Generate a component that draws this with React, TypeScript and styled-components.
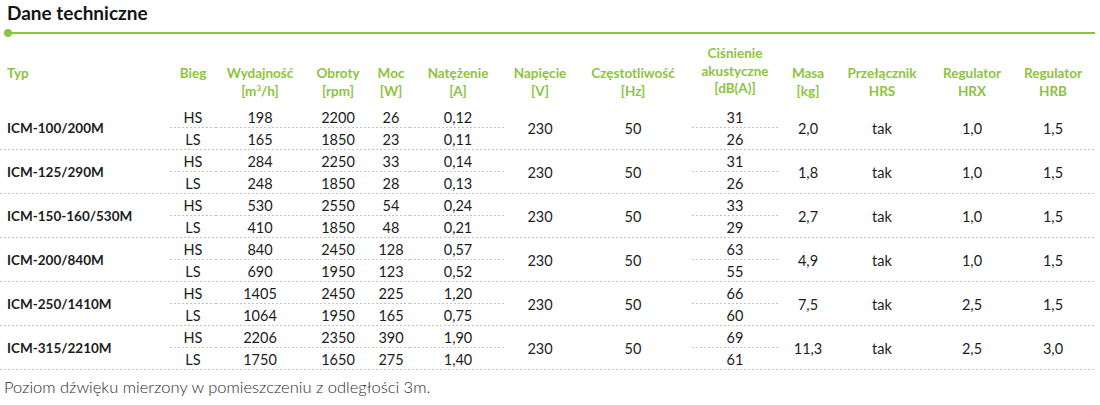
import React, { ReactNode } from "react";
import styled, { createGlobalStyle } from "styled-components";

const GREEN = "#8cc43e";
const DOTS = "#c4c4c4";

const GlobalStyle = createGlobalStyle`
  html, body {
    margin: 0;
    padding: 0;
    background: #fff;
  }
  body {
    font-family: Lato, "Open Sans", "Liberation Sans", sans-serif;
    color: #1c1c1c;
  }
`;

type Col = {
  key: string;
  w: number;
  head: ReactNode;
  pair?: boolean;
  left?: boolean;
  tall?: boolean;
};

const columns: Col[] = [
  { key: "typ", w: 170, head: "Typ", left: true },
  { key: "bieg", w: 46, head: "Bieg", pair: true },
  {
    key: "wyd",
    w: 88,
    head: (
      <>
        Wydajność
        <br />
        [m<sup>3</sup>/h]
      </>
    ),
    pair: true,
  },
  { key: "obr", w: 68, head: <>Obroty<br />[rpm]</>, pair: true },
  { key: "moc", w: 38, head: <>Moc<br />[W]</>, pair: true },
  { key: "nat", w: 96, head: <>Natężenie<br />[A]</>, pair: true },
  { key: "nap", w: 68, head: <>Napięcie<br />[V]</> },
  { key: "hz", w: 118, head: <>Częstotliwość<br />[Hz]</> },
  {
    key: "db",
    w: 86,
    head: <>Ciśnienie<br />akustyczne<br />[dB(A)]</>,
    pair: true,
    tall: true,
  },
  { key: "masa", w: 60, head: <>Masa<br />[kg]</> },
  { key: "hrs", w: 88, head: <>Przełącznik<br />HRS</> },
  { key: "hrx", w: 92, head: <>Regulator<br />HRX</> },
  { key: "hrb", w: 70, head: <>Regulator<br />HRB</> },
];

type Group = {
  typ: string;
  hs: Record<string, string>;
  ls: Record<string, string>;
  one: Record<string, string>;
};

const mk = (
  typ: string,
  hs: string[],
  ls: string[],
  masa: string,
  hrx: string,
  hrb: string
): Group => ({
  typ,
  hs: { bieg: "HS", wyd: hs[0], obr: hs[1], moc: hs[2], nat: hs[3], db: hs[4] },
  ls: { bieg: "LS", wyd: ls[0], obr: ls[1], moc: ls[2], nat: ls[3], db: ls[4] },
  one: { typ, nap: "230", hz: "50", masa, hrs: "tak", hrx, hrb },
});

const groups: Group[] = [
  mk("ICM-100/200M", ["198", "2200", "26", "0,12", "31"], ["165", "1850", "23", "0,11", "26"], "2,0", "1,0", "1,5"),
  mk("ICM-125/290M", ["284", "2250", "33", "0,14", "31"], ["248", "1850", "28", "0,13", "26"], "1,8", "1,0", "1,5"),
  mk("ICM-150-160/530M", ["530", "2550", "54", "0,24", "33"], ["410", "1850", "48", "0,21", "29"], "2,7", "1,0", "1,5"),
  mk("ICM-200/840M", ["840", "2450", "128", "0,57", "63"], ["690", "1950", "123", "0,52", "55"], "4,9", "1,0", "1,5"),
  mk("ICM-250/1410M", ["1405", "2450", "225", "1,20", "66"], ["1064", "1950", "165", "0,75", "60"], "7,5", "2,5", "1,5"),
  mk("ICM-315/2210M", ["2206", "2350", "390", "1,90", "69"], ["1750", "1650", "275", "1,40", "61"], "11,3", "2,5", "3,0"),
];

const dotted = `
  background-image: linear-gradient(to right, ${DOTS} 50%, transparent 50%);
  background-size: 4px 1px;
  background-repeat: repeat-x;
  background-position: left bottom;
`;

const Page = styled.div`
  width: 1100px;
  height: 405px;
  overflow: hidden;
`;

const Title = styled.h2`
  margin: 0;
  padding: 1px 0 0 7px;
  height: 25px;
  font-size: 19px;
  line-height: 24px;
  font-weight: 700;
  color: #141414;
`;

const Rule = styled.div`
  position: relative;
  margin: 6px 0 0 8px;
  width: 1087px;
  height: 2px;
  background: ${GREEN};

  &::before {
    content: "";
    position: absolute;
    left: -4px;
    top: -3px;
    width: 8px;
    height: 8px;
    border-radius: 50%;
    background: ${GREEN};
  }
`;

const Table = styled.div`
  width: 1096px;
  margin-top: 31px;
`;

const HeadRow = styled.div`
  display: flex;
  align-items: flex-start;
  height: 41px;
`;

const HeadCell = styled.div<{ $w: number; $left?: boolean; $tall?: boolean }>`
  flex: 0 0 ${({ $w }) => $w}px;
  text-align: ${({ $left }) => ($left ? "left" : "center")};
  padding-left: ${({ $left }) => ($left ? 7 : 0)}px;
  box-sizing: border-box;
  margin-top: ${({ $tall }) => ($tall ? -20 : 0)}px;
  color: ${GREEN};
  font-size: 13.5px;
  font-weight: 700;
  line-height: 17.5px;
  white-space: nowrap;

  sup {
    font-size: 8px;
    line-height: 0;
    vertical-align: 5px;
  }
`;

const GroupRow = styled.div`
  display: flex;
  height: 44px;
  ${dotted}
`;

const Span = styled.div<{ $w: number; $left?: boolean; $bold?: boolean }>`
  flex: 0 0 ${({ $w }) => $w}px;
  display: flex;
  align-items: center;
  justify-content: ${({ $left }) => ($left ? "flex-start" : "center")};
  padding-left: ${({ $left }) => ($left ? 7 : 0)}px;
  box-sizing: border-box;
  font-size: ${({ $bold }) => ($bold ? 13.5 : 14.5)}px;
  font-weight: ${({ $bold }) => ($bold ? 700 : 400)};
  white-space: nowrap;
`;

const Pair = styled.div<{ $w: number }>`
  flex: 0 0 ${({ $w }) => $w}px;
  display: flex;
  flex-direction: column;
`;

const Sub = styled.div<{ $sep?: boolean }>`
  height: 22px;
  display: flex;
  align-items: center;
  justify-content: center;
  font-size: 14.5px;
  ${({ $sep }) => ($sep ? dotted : "")}
`;

const Note = styled.p`
  margin: 7px 0 0 4px;
  font-size: 16.5px;
  line-height: 20px;
  font-weight: 300;
  color: #2a2a2a;
`;

export default function App() {
  return (
    <Page>
      <GlobalStyle />
      <Title>Dane techniczne</Title>
      <Rule />
      <Table>
        <HeadRow>
          {columns.map((c) => (
            <HeadCell key={c.key} $w={c.w} $left={c.left} $tall={c.tall}>
              {c.head}
            </HeadCell>
          ))}
        </HeadRow>
        {groups.map((g) => (
          <GroupRow key={g.typ}>
            {columns.map((c) =>
              c.pair ? (
                <Pair key={c.key} $w={c.w}>
                  <Sub $sep>{g.hs[c.key]}</Sub>
                  <Sub>{g.ls[c.key]}</Sub>
                </Pair>
              ) : (
                <Span key={c.key} $w={c.w} $left={c.left} $bold={c.left}>
                  {g.one[c.key]}
                </Span>
              )
            )}
          </GroupRow>
        ))}
      </Table>
      <Note>Poziom dźwięku mierzony w pomieszczeniu z odległości 3m.</Note>
    </Page>
  );
}
